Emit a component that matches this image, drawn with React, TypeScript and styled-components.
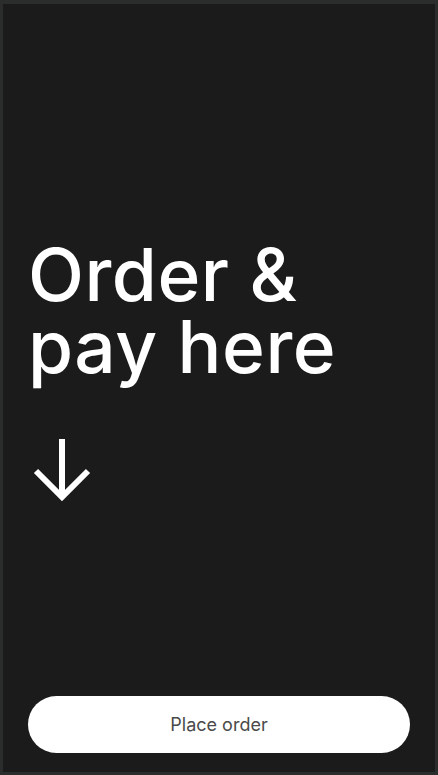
import React from 'react'
import styled, { createGlobalStyle } from 'styled-components'

const GlobalStyle = createGlobalStyle`
  html, body {
    margin: 0;
    padding: 0;
    background: #2b2d2d;
  }
  * {
    box-sizing: border-box;
  }
`

export default function App() {
  return (
    <>
      <GlobalStyle />
      <Screen>
        <Headline>
          Order &amp;
          <br />
          pay here
        </Headline>
        <ArrowWrapper>
          <DownArrowIcon />
        </ArrowWrapper>
        <PlaceOrderButton type="button">Place order</PlaceOrderButton>
      </Screen>
    </>
  )
}

function DownArrowIcon() {
  return (
    <svg width="60" height="64" viewBox="0 0 60 64" fill="none">
      <line x1="30" y1="2" x2="30" y2="60" stroke="#fff" strokeWidth="6" />
      <polyline points="4,34 30,60 56,34" stroke="#fff" strokeWidth="6" strokeLinejoin="miter" />
    </svg>
  )
}

const Screen = styled.main`
  display: flex;
  flex-direction: column;

  width: 438px;
  height: 775px;
  padding: 0 25px 19px 25px;

  border-style: solid;
  border-color: #2b2d2d;
  border-width: 4px 3px 3px 3px;
  background: #1b1b1b;

  font-family: Inter, 'Liberation Sans', sans-serif;
`

const Headline = styled.h1`
  margin: 235px 0 0 0;

  color: #ffffff;
  font-size: 73px;
  font-weight: 500;
  line-height: 72px;
  letter-spacing: 0.5px;
`

const ArrowWrapper = styled.div`
  display: flex;
  margin: 54px 0 0 4px;
`

const PlaceOrderButton = styled.button`
  display: flex;
  justify-content: center;
  align-items: center;

  width: 100%;
  height: 57px;
  margin-top: auto;

  border: none;
  border-radius: 30px;
  background: #ffffff;

  color: #4a4a4a;
  font-family: Inter, 'Liberation Sans', sans-serif;
  font-size: 18px;
  font-weight: 400;
  cursor: pointer;
`
